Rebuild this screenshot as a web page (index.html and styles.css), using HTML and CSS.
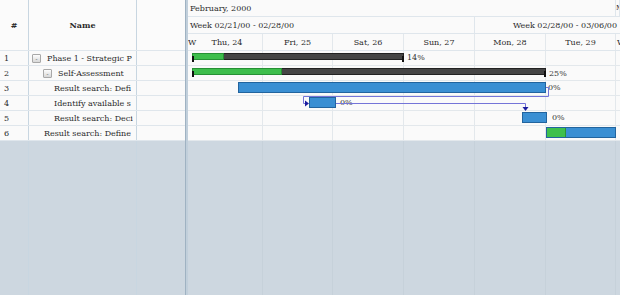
FILE: index.html
```html
<!DOCTYPE html>
<html lang="en">
<head>
    <meta charset="UTF-8">
    <title>Project Gantt</title>
    <link rel="stylesheet" href="styles.css">
</head>
<body>
    <div class="gantt-app">
        <div class="grid">
            <div class="grid-head">
                <div class="cell c-num">#</div>
                <div class="cell c-name">Name</div>
                <div class="cell c-extra"></div>
            </div>
            <div class="grid-row">
                <div class="cell c-num">1</div>
                <div class="cell c-name lvl0"><span class="toggle">-</span><span class="label">Phase 1 - Strategic P</span></div>
                <div class="cell c-extra"></div>
            </div>
            <div class="grid-row">
                <div class="cell c-num">2</div>
                <div class="cell c-name lvl1"><span class="toggle">-</span><span class="label">Self-Assessment</span></div>
                <div class="cell c-extra"></div>
            </div>
            <div class="grid-row">
                <div class="cell c-num">3</div>
                <div class="cell c-name lvl2"><span class="label">Result search: Defi</span></div>
                <div class="cell c-extra"></div>
            </div>
            <div class="grid-row">
                <div class="cell c-num">4</div>
                <div class="cell c-name lvl2"><span class="label">Identify available s</span></div>
                <div class="cell c-extra"></div>
            </div>
            <div class="grid-row">
                <div class="cell c-num">5</div>
                <div class="cell c-name lvl2"><span class="label">Result search: Deci</span></div>
                <div class="cell c-extra"></div>
            </div>
            <div class="grid-row">
                <div class="cell c-num">6</div>
                <div class="cell c-name lvl1b"><span class="label">Result search: Define</span></div>
                <div class="cell c-extra"></div>
            </div>
            <div class="grid-row filler">
                <div class="cell c-num"></div>
                <div class="cell c-name"></div>
                <div class="cell c-extra"></div>
            </div>
        </div>

        <div class="splitter"></div>

        <div class="chart">
            <div class="scale">
                <div class="scale-cell month">February, 2000</div>
                <div class="scale-cell month-next">M</div>
            </div>
            <div class="scale">
                <div class="scale-cell week">Week 02/21/00 - 02/28/00</div>
                <div class="scale-cell week-next">Week 02/28/00 - 03/06/00</div>
            </div>
            <div class="scale days">
                <div class="day d-edge">W</div>
                <div class="day">Thu, 24</div>
                <div class="day d-short">Fri, 25</div>
                <div class="day">Sat, 26</div>
                <div class="day">Sun, 27</div>
                <div class="day">Mon, 28</div>
                <div class="day d-short">Tue, 29</div>
                <div class="day d-last">W</div>
            </div>

            <div class="chart-body">
                <div class="chart-row"><div class="day d-edge"></div><div class="day"></div><div class="day d-short"></div><div class="day"></div><div class="day"></div><div class="day"></div><div class="day d-short"></div><div class="day d-last"></div></div>
                <div class="chart-row"><div class="day d-edge"></div><div class="day"></div><div class="day d-short"></div><div class="day"></div><div class="day"></div><div class="day"></div><div class="day d-short"></div><div class="day d-last"></div></div>
                <div class="chart-row"><div class="day d-edge"></div><div class="day"></div><div class="day d-short"></div><div class="day"></div><div class="day"></div><div class="day"></div><div class="day d-short"></div><div class="day d-last"></div></div>
                <div class="chart-row"><div class="day d-edge"></div><div class="day"></div><div class="day d-short"></div><div class="day"></div><div class="day"></div><div class="day"></div><div class="day d-short"></div><div class="day d-last"></div></div>
                <div class="chart-row"><div class="day d-edge"></div><div class="day"></div><div class="day d-short"></div><div class="day"></div><div class="day"></div><div class="day"></div><div class="day d-short"></div><div class="day d-last"></div></div>
                <div class="chart-row"><div class="day d-edge"></div><div class="day"></div><div class="day d-short"></div><div class="day"></div><div class="day"></div><div class="day"></div><div class="day d-short"></div><div class="day d-last"></div></div>
                <div class="chart-row filler"><div class="day d-edge"></div><div class="day"></div><div class="day d-short"></div><div class="day"></div><div class="day"></div><div class="day"></div><div class="day d-short"></div><div class="day d-last"></div></div>

                <!-- task bars, placed on the time scale -->
                <div class="summary" style="left:4px; top:2px; width:212px;"><div class="done" style="width:30px;"></div></div>
                <span class="pct" style="left:219px; top:0px;">14%</span>

                <div class="summary" style="left:4px; top:17px; width:354px;"><div class="done" style="width:88px;"></div></div>
                <span class="pct" style="left:361px; top:16px;">25%</span>

                <div class="task" style="left:50px; top:31px; width:308px;"></div>
                <span class="pct" style="left:360px; top:30px;">0%</span>

                <div class="task" style="left:121px; top:46px; width:27px;"></div>
                <span class="pct" style="left:152px; top:45px;">0%</span>

                <div class="task" style="left:334px; top:61px; width:25px;"></div>
                <span class="pct" style="left:364px; top:60px;">0%</span>

                <div class="task" style="left:358px; top:76px; width:70px;"><div class="done" style="width:19px;"></div></div>

                <svg class="links" width="432" height="90" viewBox="0 0 432 90">
                    <polyline points="358,36.5 360.5,36.5 360.5,45.5 115.5,45.5 115.5,52.5 118,52.5" />
                    <polygon points="117,49.5 121,52.5 117,55.5" />
                    <polyline points="148,52.5 337.5,52.5 337.5,57" />
                    <polygon points="334.5,56 340.5,56 337.5,60" />
                </svg>
            </div>
        </div>
    </div>
</body>
</html>
```

FILE: styles.css
```css
body {
    margin: 0;
    font-family: "DejaVu Serif", serif;
    font-size: 8px;
    color: #2a2a2a;
    background: #fff;
}
.gantt-app {
    display: flex;
    width: 620px;
    height: 295px;
    overflow: hidden;
}

/* left task grid */
.grid {
    width: 185px;
    display: flex;
    flex-direction: column;
    background: #fafafa;
}
.grid-head,
.grid-row {
    display: flex;
    border-bottom: 1px solid #dfe6ec;
}
.grid-head {
    height: 51px;
    box-sizing: border-box;
    background: #fbfbfb;
    font-weight: bold;
}
.grid-row {
    height: 15px;
    box-sizing: border-box;
}
.grid-row.filler {
    flex: 1;
    border-bottom: none;
    background: #cdd7e0;
}
.cell {
    box-sizing: border-box;
    border-right: 1px solid #c8d6e1;
    display: flex;
    align-items: center;
    white-space: nowrap;
    overflow: hidden;
}
.c-num {
    width: 29px;
    padding-left: 4px;
}
.c-name {
    width: 108px;
    padding-right: 1px;
}
.c-extra {
    width: 48px;
    border-right: none;
}
.grid-head .c-num,
.grid-head .c-name {
    justify-content: center;
    padding: 0;
}
.label {
    overflow: hidden;
    min-width: 0;
}
.lvl0 { padding-left: 3px; }
.lvl1 { padding-left: 14px; }
.lvl2 { padding-left: 25px; }
.lvl1b { padding-left: 15px; }
.toggle {
    flex: none;
    width: 9px;
    height: 9px;
    margin-right: 6px;
    box-sizing: border-box;
    border: 1px solid #a8a8a8;
    border-radius: 1px;
    background: linear-gradient(#fdfdfd, #d8d8d8);
    font-size: 6px;
    line-height: 7px;
    text-align: center;
    color: #555;
}

.splitter {
    width: 3px;
    background: #c1cfdb;
    border-left: 1px solid #9fb2c2;
    box-sizing: border-box;
}

/* chart side */
.chart {
    flex: 1;
    display: flex;
    flex-direction: column;
    overflow: hidden;
    background: #fafafa;
}
.scale {
    display: flex;
    height: 17px;
    box-sizing: border-box;
    border-bottom: 1px solid #dfe6ec;
}
.scale-cell {
    box-sizing: border-box;
    display: flex;
    align-items: center;
    white-space: nowrap;
    overflow: hidden;
    border-right: 1px solid #dfe6ec;
}
.month {
    width: 428px;
    padding-left: 2px;
}
.month-next {
    flex: 1;
    padding-left: 0;
    font-size: 7px;
}
.week {
    width: 287px;
    padding-left: 2px;
}
.week-next {
    flex: 1;
    justify-content: flex-end;
    padding-right: 3px;
    border-right: none;
}
.day {
    width: 71px;
    flex: none;
    box-sizing: border-box;
    border-right: 1px solid #e3e8ec;
    display: flex;
    align-items: center;
    justify-content: center;
    white-space: nowrap;
    overflow: hidden;
}
.d-short { width: 70px; }
.d-edge {
    width: 4px;
    overflow: visible;
    justify-content: flex-start;
    border-right: none;
}
.d-last {
    flex: 1;
    justify-content: flex-start;
    padding-left: 1px;
    border-right: none;
}

.chart-body {
    flex: 1;
    display: flex;
    flex-direction: column;
    position: relative;
}
.chart-row {
    display: flex;
    height: 15px;
    box-sizing: border-box;
    border-bottom: 1px solid #e3e8ec;
}
.chart-row.filler {
    flex: 1;
    border-bottom: none;
    background: #cdd7e0;
}
.chart-row.filler .day {
    border-right-color: #c6d1da;
}

.summary {
    position: absolute;
    height: 7px;
    box-sizing: border-box;
    background: #454545;
    border: 1px solid #222;
}
.summary::before,
.summary::after {
    content: "";
    position: absolute;
    top: 2px;
    width: 2px;
    height: 6px;
    background: #111;
}
.summary::before { left: -1px; }
.summary::after { right: -1px; }
.summary .done {
    height: 100%;
    background: #3dbe4c;
    margin: -1px 0 0 -1px;
    border: 1px solid #269034;
    box-sizing: content-box;
}
.task {
    position: absolute;
    height: 11px;
    box-sizing: border-box;
    background: #3a8fd3;
    border: 1px solid #22649e;
}
.task .done {
    height: 100%;
    background: #3ec04d;
    box-sizing: border-box;
    border-right: 1px solid #2a9637;
}
.pct {
    position: absolute;
    line-height: 13px;
    color: #333;
    white-space: nowrap;
}
.links {
    position: absolute;
    left: 0;
    top: 0;
}
.links polyline {
    fill: none;
    stroke: #7474d8;
    stroke-width: 1;
}
.links polygon {
    fill: #1c1c9e;
}
```
